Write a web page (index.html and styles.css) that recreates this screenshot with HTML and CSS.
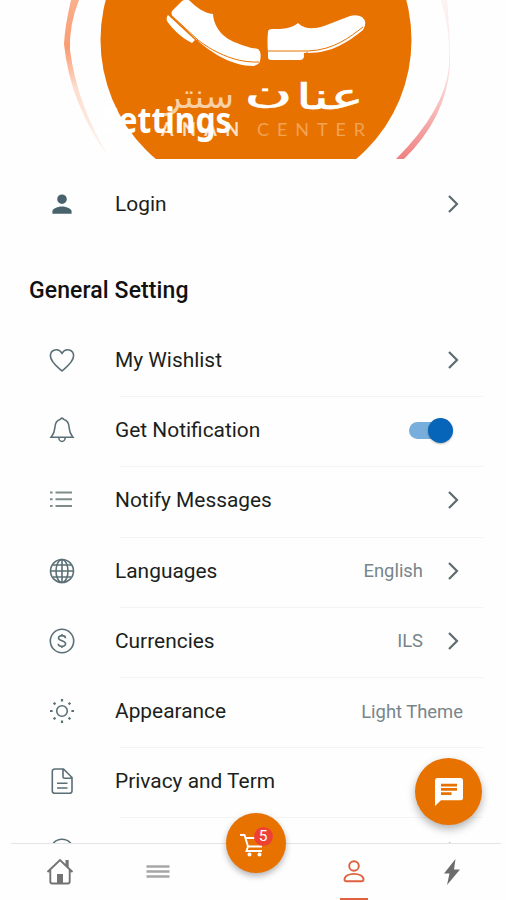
FILE: index.html
```html
<!DOCTYPE html>
<html lang="en">
<head>
    <meta charset="utf-8">
    <title>Settings</title>
    <link rel="stylesheet" href="styles.css">
</head>
<body>
    <div class="app">
        <header class="hero">
            <svg class="logo" width="506" height="159" viewBox="0 0 506 159">
                <defs>
                    <linearGradient id="left" x1="0" y1="0" x2="0" y2="1">
                        <stop offset="0" stop-color="#f9b08c"/>
                        <stop offset=".3" stop-color="#fa9c72"/>
                        <stop offset=".55" stop-color="#fddccd"/>
                        <stop offset="1" stop-color="#fdf6f0"/>
                    </linearGradient>
                    <linearGradient id="right" x1="0" y1="0" x2="0" y2="1">
                        <stop offset="0" stop-color="#fdf3f3"/>
                        <stop offset=".5" stop-color="#fbdcdc"/>
                        <stop offset="1" stop-color="#f08080"/>
                    </linearGradient>
                </defs>
                <path d="M71 0Q65 25 64 44Q70 105 110 159Q77 105 70 50Q69 25 79 0Z" fill="url(#left)"/>
                <path d="M441 0Q451 30 449 66Q445 110 396 159H404Q446 118 450 66Q450 30 447 0Z" fill="url(#right)"/>
                <circle cx="256" cy="40" r="155.5" fill="#e87200"/>
                <g fill="#fff">
                    <path d="M182 1Q187-2 190 1C196 7 204 13 213 14C214 29 225 39 237 43C246 47 252 48 258 49Q262 52 260 61Q259 65 253 66C232 66 212 53 198 41L172 16Q171 13 172 11Z"/>
                    <path d="M168 15L195 40L192 43C182 38 173 30 167 21Q166 17 168 15Z"/>
                    <path d="M268 32Q268 29 272 29C282 29 291 29 298 23C305 30 314 29 324 26L350 16Q357 14 362 17Q368 22 363 30C348 42 332 53 308 53L268 53Q267 40 268 32Z"/>
                    <path d="M268 53H304V57Q303 60 300 60H271Q268 60 268 57Z"/>
                </g>
                <g fill="none" stroke="#e87200" stroke-width="1">
                    <path d="M170 14L198 40C216 54 238 63 259 62"/>
                    <path d="M268 51H308C334 50 350 37 363 27"/>
                </g>
                <path d="M194 43L198 41M304 55L308 53" stroke="#e87200" stroke-width="2"/>
                <text class="arabic" transform="translate(364 109) scale(1.820 1.150)">عنا</text>
                <text class="arabic" transform="translate(293 103) scale(2.150 1)">ن</text>
                <text class="arabic thin" transform="translate(234 108) scale(1.120 1.100)">سنتر</text>
                <text class="latin" x="161" y="136" textLength="78">ANAN</text>
                <text class="latin faded" x="257" y="136" textLength="108">CENTER</text>
            </svg>
            <h1>Settings</h1>
        </header>

        <ul class="list">
            <li class="row login">
                <svg class="icon" viewBox="0 0 28 28"><path d="M14 14a4.8 4.8 0 1 0 0-9.600a4.800 4.800 0 0 0 0 9.600M4.400 23.700v-2.400c0-3.200 6.400-4.900 9.600-4.900s9.600 1.700 9.600 4.900v2.400z" fill="#49636c"/></svg>
                <span class="label">Login</span>
                <svg class="chevron" viewBox="0 0 12 20"><path d="M2 2l8 8-8 8"/></svg>
            </li>
        </ul>

        <h2>General Setting</h2>

        <ul class="list general">
            <li class="row">
                <svg class="icon" viewBox="0 0 28 28"><path d="M14 25C10 21.500 2.400 16 2.400 9.800C2.400 3.400 10.500 1.500 14 7.300C17.500 1.500 25.600 3.400 25.600 9.800C25.600 16 18 21.500 14 25z"/></svg>
                <span class="label">My Wishlist</span>
                <svg class="chevron" viewBox="0 0 12 20"><path d="M2 2l8 8-8 8"/></svg>
            </li>
            <li class="row">
                <svg class="icon" viewBox="0 0 28 28"><path d="M12.500 3.200a1.600 1.600 0 0 1 3 0C19.500 4.200 21 8 21.200 12C21.500 17 23 18.500 25 21.300H3C5 18.500 6.500 17 6.800 12C7 8 8.500 4.200 12.500 3.200zM10.800 21.500a3.200 4 0 0 0 6.400 0"/></svg>
                <span class="label">Get Notification</span>
                <span class="switch"></span>
            </li>
            <li class="row">
                <svg class="icon gray" viewBox="0 0 28 28"><path d="M7.500 6.500H24M7.500 13.200H24M7.500 19.900H24M2 6.500h2.600M2 13.200h2.600M2 19.900h2.600"/></svg>
                <span class="label">Notify Messages</span>
                <svg class="chevron" viewBox="0 0 12 20"><path d="M2 2l8 8-8 8"/></svg>
            </li>
            <li class="row">
                <svg class="icon" viewBox="0 0 28 28"><circle cx="14" cy="14" r="11.500"/><ellipse cx="14" cy="14" rx="6" ry="11.500"/><path d="M14 2.500v23M2.500 14h23M5 8h18M5 20h18"/></svg>
                <span class="label">Languages</span>
                <span class="value">English</span>
                <svg class="chevron" viewBox="0 0 12 20"><path d="M2 2l8 8-8 8"/></svg>
            </li>
            <li class="row">
                <svg class="icon" viewBox="0 0 28 28"><circle cx="14" cy="14" r="11.700"/><path d="M17.500 11.200C17.500 7.800 10.500 7.800 10.500 11.100C10.500 14.300 17.600 13.300 17.600 16.800C17.600 20.200 10.300 20.200 10.300 16.700M14 7v2M14 19v2"/></svg>
                <span class="label">Currencies</span>
                <span class="value">ILS</span>
                <svg class="chevron" viewBox="0 0 12 20"><path d="M2 2l8 8-8 8"/></svg>
            </li>
            <li class="row">
                <svg class="icon" viewBox="0 0 28 28"><circle cx="14" cy="14" r="5.300"/><path d="M14 2v2.600M14 23.400V26M2 14h2.600M23.400 14H26M5.700 5.700l1.700 1.700M20.600 20.600l1.700 1.700M5.700 22.300l1.700-1.700M20.600 7.400l1.700-1.700" stroke-width="2.200"/></svg>
                <span class="label">Appearance</span>
                <span class="value last">Light Theme</span>
            </li>
            <li class="row">
                <svg class="icon" viewBox="0 0 28 28"><path d="M7 2h8.500l8.500 8.500V24a2.300 2.300 0 0 1-2.300 2.300H6.600A2.300 2.300 0 0 1 4.300 24V4.500A2.500 2.500 0 0 1 7 2zM15 2v7.500a1.700 1.700 0 0 0 1.700 1.700H24M9 16.300h10.500M9 21h10.500"/></svg>
                <span class="label">Privacy and Term</span>
            </li>
            <li class="row">
                <svg class="icon" viewBox="0 0 28 28"><circle cx="14" cy="14" r="11.700"/></svg>
                <span class="label">About Us</span>
                <svg class="chevron" viewBox="0 0 12 20"><path d="M2 2l8 8-8 8"/></svg>
            </li>
        </ul>

        <button class="chat">
            <svg width="28" height="28" viewBox="0 0 28 28"><path d="M2.500 0h23A2.500 2.500 0 0 1 28 2.500v17.300a2.500 2.500 0 0 1-2.500 2.500H6L0 28V2.500A2.500 2.500 0 0 1 2.500 0z" fill="#fff"/><path d="M6 7.200h16M6 11.400h16M6 15.600h10.500" stroke="#e87200" stroke-width="2.800"/></svg>
        </button>

        <nav class="tabbar">
            <a class="tab"><svg width="28" height="28" viewBox="0 0 28 28" fill="none" stroke="#737373" stroke-width="1.900"><path d="M1.500 14L14 2l12.500 12M4.300 12v11.500a2 2 0 0 0 2 2h15.400a2 2 0 0 0 2-2V12"/><path d="M19.500 2h3.200v8l-3.200-3z" fill="#737373" stroke="none"/><path d="M11 16h6v9.500h-6z" fill="#737373" stroke="none"/></svg></a>
            <a class="tab"><svg width="24" height="16" viewBox="0 0 24 16" stroke="#a6a6a6" stroke-width="2.400"><path d="M.5 2.500h23M.5 7.500h23M.5 12.500h23"/></svg></a>
            <a class="tab cart">
                <svg width="24" height="24" viewBox="0 0 24 24" fill="none" stroke="#fff" stroke-width="1.900"><path d="M0 2h4.500L8 13.500h14M6 5h14.500M8 13.500L6.500 18H22"/><circle cx="9.500" cy="21.500" r="2" fill="#fff" stroke="none"/><circle cx="19.500" cy="21.500" r="2" fill="#fff" stroke="none"/></svg>
                <span class="badge">5</span>
            </a>
            <a class="tab active"><svg width="22" height="24" viewBox="0 0 22 24" fill="none" stroke="#e0603f" stroke-width="1.900"><circle cx="11" cy="6" r="4.800"/><path d="M1.500 19.500C1.500 12 20.500 12 20.500 19.500Q20.500 21.300 18.500 21.300H3.500Q1.500 21.300 1.500 19.500z"/></svg></a>
            <a class="tab"><svg width="18" height="26" viewBox="0 0 18 26"><path d="M12.500 0L1 14.500h5.500L4 26L17 10.500h-6z" fill="#6c6c6c"/></svg></a>
        </nav>
    </div>
</body>
</html>
```
FILE: styles.css
```css
* {
    box-sizing: border-box;
}
body {
    margin: 0;
    background-color: #fefefe;
    font-family: Roboto, sans-serif;
    color: #1c1f20;
}
.app {
    position: relative;
    width: 506px;
    height: 900px;
    overflow: hidden;
}
.hero {
    position: relative;
    height: 159px;
}
.logo {
    display: block;
}
.arabic {
    font-family: "DejaVu Sans", sans-serif;
    font-size: 31px;
    fill: #fff;
    stroke: #fff;
    stroke-width: 0.5;
    direction: rtl;
}
.thin {
    fill: #f9cfa5;
    stroke: none;
}
.latin {
    font-family: Lato, sans-serif;
    font-size: 18px;
    font-weight: 700;
    fill: #fbe0c8;
}
.faded {
    font-weight: 400;
    fill: #f2a254;
}
h1 {
    position: absolute;
    left: 101px;
    bottom: 16px;
    margin: 0;
    font-family: "Noto Sans", sans-serif;
    font-size: 35px;
    line-height: 46px;
    font-weight: 700;
    color: #fff;
    transform: scaleX(0.91);
    transform-origin: left;
}
h2 {
    margin: 34px 0 0 29px;
    font-size: 23px;
    line-height: 36px;
    font-weight: 500;
    letter-spacing: 0.1px;
    color: #111;
}
.list {
    margin: 0;
    padding: 0;
    list-style: none;
}
.general {
    margin-top: 16px;
}
.row {
    position: relative;
    display: flex;
    align-items: center;
    height: 70.2px;
    padding: 0 47px 0 48px;
}
.login {
    height: 80px;
    padding-top: 10px;
}
.row + .row::before {
    content: "";
    position: absolute;
    top: 1px;
    left: 119px;
    right: 23px;
    height: 1px;
    background-color: #f3f4f4;
}
.icon {
    width: 28px;
    height: 28px;
    margin-right: 39px;
    fill: none;
    stroke: #5a6f76;
    stroke-width: 1.6;
}
.gray {
    stroke: #7f8c8c;
    stroke-width: 2;
}
.login .icon {
    stroke: none;
}
.label {
    flex: 1;
    font-size: 20.9px;
}
.value {
    margin-right: 24px;
    font-size: 18.4px;
    color: #78858a;
}
.last {
    margin-right: -4px;
}
.chevron {
    width: 12px;
    height: 20px;
    fill: none;
    stroke: #5f6b70;
    stroke-width: 2.2;
}
.switch {
    position: relative;
    width: 40px;
    height: 17px;
    margin-right: 10px;
    border-radius: 9px;
    background-color: #78aedb;
}
.switch::after {
    content: "";
    position: absolute;
    right: -4px;
    top: -4px;
    width: 25px;
    height: 25px;
    border-radius: 50%;
    background-color: #0665b8;
    box-shadow: 0 1px 2px rgba(0, 0, 0, 0.3);
}
.chat {
    position: absolute;
    left: 415px;
    top: 758px;
    z-index: 2;
    display: flex;
    align-items: center;
    justify-content: center;
    width: 67px;
    height: 67px;
    padding: 0;
    border: none;
    border-radius: 50%;
    background-color: #e87200;
    box-shadow: 0 4px 8px rgba(0, 0, 0, 0.3);
}
.tabbar {
    position: absolute;
    left: 0;
    bottom: 0;
    display: flex;
    width: 506px;
    height: 57px;
    padding: 0 5px 0 11px;
    background-color: #fefefe;
}
.tabbar::before {
    content: "";
    position: absolute;
    left: 11px;
    right: 5px;
    top: 0;
    height: 1px;
    background-color: #e4e4e4;
}
.tab {
    position: relative;
    flex: 1;
    display: flex;
    align-items: center;
    justify-content: center;
}
.cart {
    flex: none;
    width: 60px;
    height: 60px;
    margin: -30px 19px 0;
    border-radius: 50%;
    background-color: #e87200;
    box-shadow: 0 3px 6px rgba(0, 0, 0, 0.3);
}
.cart svg {
    margin: 4px 8px 0 0;
}
.badge {
    position: absolute;
    left: 27.5px;
    top: 14px;
    width: 19px;
    height: 19px;
    border-radius: 50%;
    background-color: #ee4136;
    color: #fff;
    font-size: 15.5px;
    line-height: 19px;
    text-align: center;
}
.active::after {
    content: "";
    position: absolute;
    bottom: 0;
    width: 28px;
    height: 2px;
    background-color: #e0603f;
}
```
